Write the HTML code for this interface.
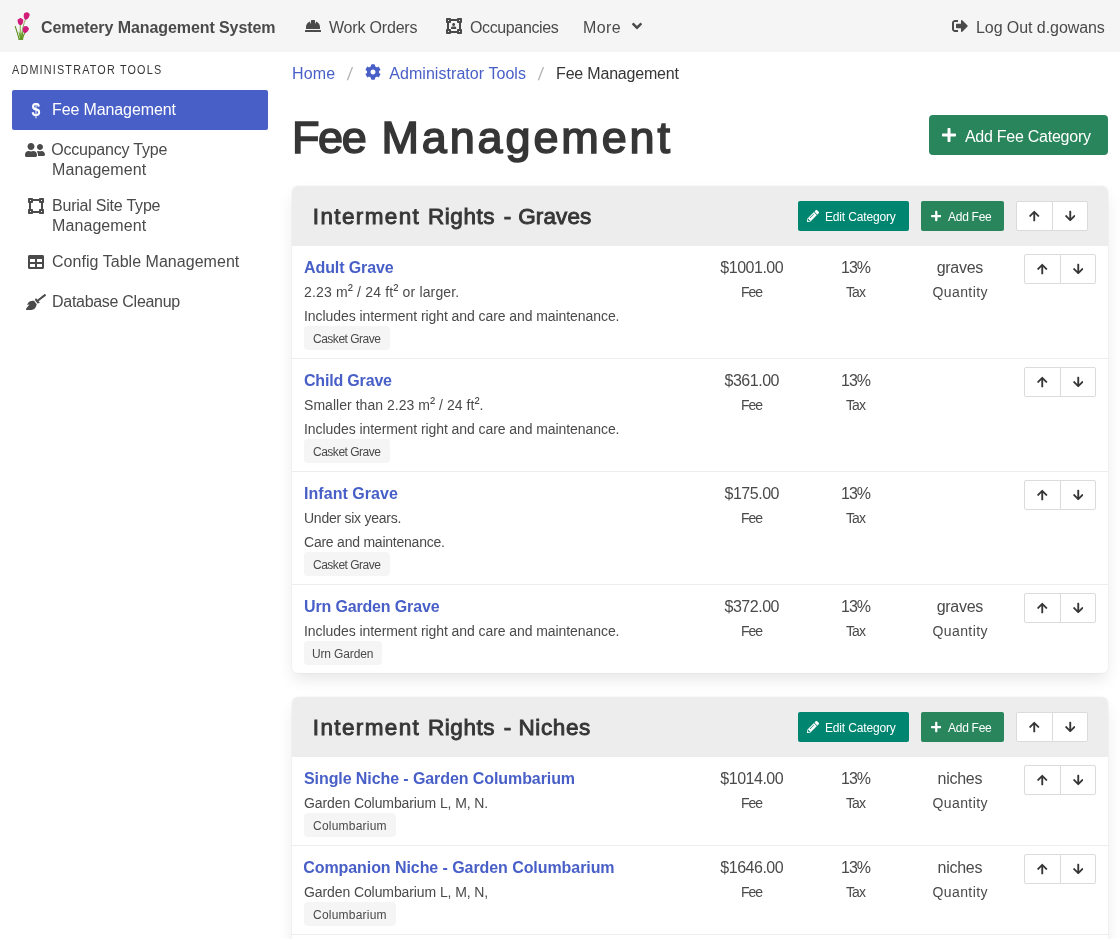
<!DOCTYPE html>
<html lang="en">
<head>
<meta charset="utf-8">
<title>Fee Management: Cemetery Management System</title>
<style>
*{box-sizing:border-box;margin:0;padding:0}
html,body{width:1120px;height:939px;overflow:hidden;background:#fff}
body{will-change:transform;font-family:"Liberation Sans",sans-serif;font-size:16px;line-height:1.5;color:#4a4a4a;position:relative}
a{color:#485fc7;text-decoration:none}
svg{display:block;fill:currentColor}
.ic{display:inline-flex;align-items:center;justify-content:center;width:24px;height:24px;flex:none}
/* navbar */
.navbar{position:absolute;left:0;top:0;width:1120px;height:52px;background:#f5f5f5;color:#4a4a4a}
.navbar .it{position:absolute;top:0;height:52px;display:flex;align-items:center;white-space:nowrap;color:#4a4a4a}
.brand b{font-weight:700;margin-left:8px}
.logo{flex:none}
.chev{margin-left:11px}
/* side menu */
.menu{position:absolute;left:12px;top:52px;width:256px}
.menu-label{position:absolute;left:0;top:8px;font-size:12px;text-transform:uppercase;color:#363636;line-height:18px;white-space:nowrap}
.menu a{position:absolute;left:0;width:256px;display:flex;align-items:flex-start;padding:8px 12px;line-height:20px;color:#4a4a4a;border-radius:2px}
.menu a .ic{margin-right:4px}
.menu a.is-active{background:#485fc7;color:#fff}
.dol{font-weight:700;font-size:19px;line-height:24px;transform:scaleX(.84);position:relative;top:0px}
/* main */
.crumb{position:absolute;left:292px;top:61px;height:24px;display:flex;align-items:center;white-space:nowrap}
.crumb .sep{color:#b5b5b5;width:6px;text-align:center;margin:0 12px;position:relative;top:1px;font-size:18px;line-height:24px;display:inline-block;transform:skewX(-6deg)}
.crumb .cur{color:#363636}
.crumb .cog{margin-right:8px;position:relative;top:-1px}
h1{position:absolute;left:292px;top:104px;font-size:45px;font-weight:400;-webkit-text-stroke:1.6px #363636;line-height:66px;color:#363636;white-space:nowrap}
.btn{display:inline-flex;align-items:center;justify-content:center;border:1px solid transparent;border-radius:4px;color:#fff;white-space:nowrap}
.btn.big{position:absolute;left:929px;top:115px;width:179px;height:40px;background:#29855b;justify-content:flex-start;padding-left:8px}
.btn.big .ic{margin-right:4px;position:relative;left:-1px}
.btn.sm{position:absolute;top:15px;height:30px;font-size:12px;border-radius:2px;justify-content:flex-start;padding-left:5px}
.btn.sm .ic{width:18px;height:18px;margin-right:3px}
.btn.teal{background:#008571}
.btn.green{background:#29855b}
.arrows{position:absolute;display:flex;width:72px;height:30px}
.arrows span{display:flex;align-items:center;justify-content:center;width:36px;height:30px;background:#fff;border:1px solid #dbdbdb;color:#363636}
.arrows span:first-child{border-radius:2px 0 0 2px;width:37px;margin-right:-1px}
.arrows span:last-child{border-radius:0 2px 2px 0}
.panel{position:absolute;left:292px;width:816px;border-radius:6px;box-shadow:0 8px 16px -2px rgba(10,10,10,.1),0 0 0 1px rgba(10,10,10,.02);background:#fff}
.ph{position:relative;height:60px;background:#ededed;border-radius:6px 6px 0 0;color:#363636}
.ph h2{position:absolute;left:20px;top:15px;font-size:22.5px;font-weight:400;-webkit-text-stroke:.9px #363636;line-height:30px;white-space:nowrap}
.row{position:relative;border-bottom:1px solid #ededed;color:#4a4a4a}
.row:last-child{border-bottom:0}
.row .l{padding:8px 12px;width:408px;white-space:nowrap}
.row .l p{height:24px;line-height:24px;font-size:14px}
.row .l p.t{font-size:16px;font-weight:700}
.row .l p.t a{color:#485fc7}
.sq{font-size:1.1em;line-height:0;position:relative;top:-2px}
.tag{display:inline-block;height:24px;line-height:24px;padding:0 0 0 9px;white-space:nowrap;overflow:hidden;border-radius:4px;background:#f5f5f5;font-size:12px;color:#4a4a4a;vertical-align:top}
.c{position:absolute;top:8px;width:104px;text-align:center;white-space:nowrap}
.c p{height:24px;line-height:24px}
.c p.s{font-size:14px}
.c1{left:408px}.c2{left:512px}.c3{left:616px}
.row .arrows{left:732px;top:8px}
/* vertical nudges to match Segoe metrics */
.navbar .it b,.navbar .nt{position:relative;top:2px}
.menu-label span{position:relative;top:1px;display:inline-block;transform:scaleX(.9);transform-origin:0 50%}
.mt{position:relative;top:2px}
.crumb [class^=k-]{position:relative;top:1px}
h1 span{position:relative;top:1px}
.btn.big [class^=k-]{position:relative;top:2px}
.btn.sm [class^=k-]{position:relative;top:1px}
.ph h2 span{position:relative;top:1px}
.row .l p>a,.row .l p>[class^=k-]{position:relative;top:2px}
.tag [class^=k-]{position:relative;top:1px}
.c p span{position:relative;top:2px}
.k-brand{letter-spacing:-0.080px;margin-left:-1.00px}.k-n-wo{letter-spacing:-0.190px}.k-n-occ{letter-spacing:-0.375px}.k-n-more{letter-spacing:0.417px}.k-n-out{letter-spacing:-0.067px}.k-label{letter-spacing:1.327px}.k-m-fee{letter-spacing:-0.115px}.k-m-occ{letter-spacing:-0.215px;margin-left:-0.80px}.k-m-mgmt{letter-spacing:0.089px}.k-m-bur{letter-spacing:-0.220px}.k-m-cfg{letter-spacing:0.036px}.k-m-db{letter-spacing:-0.287px}.k-b-home{letter-spacing:0.133px}.k-b-admin{letter-spacing:0.056px}.k-b-cur{letter-spacing:-0.192px}.k-title1{letter-spacing:-1.400px}.k-title2{letter-spacing:2.878px;margin-left:3.55px}.k-bigbtn{letter-spacing:-0.253px;margin-left:-1.10px}.k-t-adult{letter-spacing:-0.100px}.k-d-223{letter-spacing:0.158px}.k-d-inc{letter-spacing:-0.073px}.k-g-casket{letter-spacing:-0.491px}.k-f-1001{letter-spacing:-0.486px;margin-right:0.486px}.k-l-fee{letter-spacing:-1.000px;margin-right:1.000px}.k-p-13{letter-spacing:-1.000px;margin-right:1.000px}.k-l-tax{letter-spacing:-1.000px;margin-right:1.000px}.k-q-graves{letter-spacing:-0.260px;margin-right:0.260px}.k-l-qty{letter-spacing:0.386px;margin-right:-0.386px}.k-t-child{letter-spacing:-0.180px}.k-d-smaller{letter-spacing:0.038px}.k-t-infant{letter-spacing:0.045px}.k-d-under{letter-spacing:-0.253px}.k-d-care{letter-spacing:-0.232px}.k-t-urn{letter-spacing:-0.153px}.k-g-urn{letter-spacing:-0.133px;margin-left:-1.10px}.k-hw-int{letter-spacing:1.375px;margin-left:0.80px}.k-hw-rights{letter-spacing:0.540px;margin-left:1.55px}.k-hw-dash{letter-spacing:0.000px;margin-left:2.50px}.k-hw-graves{letter-spacing:0.100px;margin-left:0.65px}.k-editcat{letter-spacing:-0.158px}.k-addfee{letter-spacing:-0.267px}.k-t-single{letter-spacing:-0.086px}.k-d-gc1{letter-spacing:-0.096px}.k-g-col{letter-spacing:0.225px}.k-t-comp{letter-spacing:-0.069px;margin-left:-0.80px}.k-d-gc2{letter-spacing:-0.096px}.k-hw-niches{letter-spacing:0.600px;margin-left:0.90px}
</style>
</head>
<body>
<nav class="navbar">
<a class="it brand" style="left:12px"><svg class="logo" width="22" height="28" viewBox="0 0 22 28"><g fill="none" stroke-linecap="round"><path d="M3.200 14.400C4.600 18.500 5.800 22.500 7.200 27.200" stroke="#5b8c1c" stroke-width="1.100"/><path d="M8.300 12.500C8.100 17.500 8.200 22 8.500 27.300" stroke="#86b045" stroke-width="1.100"/><path d="M13.500 7.200C11.600 12 10.400 17 9.600 22" stroke="#6a9a2a" stroke-width=".8"/><path d="M12.800 20.800C11.600 23 10.800 25 10.400 27.300" stroke="#5b8c1c" stroke-width="1.100"/></g><path d="M6.300 19.500C7.200 22 7.700 24.500 7.900 27.800L10.800 27.800C10.700 24.500 11 21 11.800 17.500C10.300 19.500 9.500 21.500 9.100 23.500C8.400 21.800 7.400 20.500 6.300 19.500Z" fill="#669a22"/><path d="M6.400 27.800L11.200 27.800L11 26.600L6.200 26.400Z" fill="#5f9220"/><g fill="#d41c7b"><path transform="rotate(14 14.500 3.800)" d="M11.700 1.600C12.400 1.200 13 1 13.500 .4C14 .1 14.600 0 15 .3C15.800 .8 16.600 1 17.300 1.500C17.600 3.500 17.200 5.800 15.600 7.300C14.900 7.600 14 7.600 13.300 7.300C11.800 5.900 11.400 3.600 11.700 1.600Z"/><path d="M5.700 7.400C6.400 6.900 7.100 6.800 7.700 6.200C8.200 6 8.700 6 9.100 6.200C9.800 6.700 10.500 6.900 11.200 7.400C11.500 9.300 11.100 11.400 9.600 12.800C8.900 13.100 8 13.100 7.300 12.800C5.800 11.400 5.400 9.300 5.700 7.400Z"/><path transform="rotate(22 13.600 17.400)" d="M10.800 15.200C11.500 14.800 12.200 14.600 12.800 14C13.300 13.800 13.800 13.800 14.200 14C14.900 14.500 15.700 14.700 16.400 15.200C16.700 17.100 16.300 19.300 14.700 20.800C14 21.100 13.100 21.100 12.400 20.800C10.900 19.400 10.500 17.100 10.800 15.200Z"/></g><g fill="#9c0f55" opacity=".5"><path transform="rotate(14 14.500 3.800)" d="M14.300 2.500C14.800 4 14.800 5.500 14.400 7.300L15.300 7.200C15.400 5.500 15.200 3.800 14.300 2.500Z"/><path d="M8.200 8C8.700 9.500 8.700 11 8.300 12.800L9.200 12.700C9.300 11 9.100 9.300 8.200 8Z"/><path transform="rotate(22 13.600 17.400)" d="M13.400 16C13.900 17.500 13.900 19 13.500 20.800L14.400 20.700C14.500 19 14.300 17.300 13.400 16Z"/></g></svg>
<b><span class="k-brand">Cemetery Management System</span></b></a>
<a class="it" style="left:301px"><span class="ic"><svg width="16" height="16" viewBox="0 0 512 512"><path d="M480 288c0-80.250-49.280-148.920-119.190-177.620L320 192V80a16 16 0 0 0-16-16h-96a16 16 0 0 0-16 16v112l-40.810-81.620C81.280 139.080 32 207.750 32 288v64h448zm16 96H16a16 16 0 0 0-16 16v32a16 16 0 0 0 16 16h480a16 16 0 0 0 16-16v-32a16 16 0 0 0-16-16z"/></svg></span><span class="nt" style="margin-left:4px"><span class="k-n-wo">Work Orders</span></span></a>
<a class="it" style="left:442px"><span class="ic" style="position:relative"><svg width="16" height="16" viewBox="0 0 512 512"><path d="M512 128V32c0-17.670-14.330-32-32-32h-96c-17.670 0-32 14.330-32 32H160c0-17.670-14.330-32-32-32H32C14.330 0 0 14.330 0 32v96c0 17.670 14.330 32 32 32v192c-17.670 0-32 14.330-32 32v96c0 17.670 14.330 32 32 32h96c17.670 0 32-14.330 32-32h192c0 17.670 14.330 32 32 32h96c17.670 0 32-14.330 32-32v-96c0-17.670-14.330-32-32-32V160c17.670 0 32-14.330 32-32zm-96-64h32v32h-32V64zM64 64h32v32H64V64zm32 384H64v-32h32v32zm352 0h-32v-32h32v32zm-32-96h-32c-17.670 0-32 14.330-32 32v32H160v-32c0-17.670-14.330-32-32-32H96V160h32c17.670 0 32-14.330 32-32V96h192v32c0 17.670 14.330 32 32 32h32v192z"/></svg><svg width="5.25" height="6" viewBox="0 0 448 512" style="position:absolute;left:9.350px;top:8.900px"><path d="M224 256c70.700 0 128-57.300 128-128S294.700 0 224 0 96 57.300 96 128s57.300 128 128 128zm89.600 32h-16.700c-22.200 10.200-46.900 16-72.900 16s-50.600-5.800-72.900-16h-16.700C60.200 288 0 348.200 0 422.400V464c0 26.500 21.500 48 48 48h352c26.500 0 48-21.500 48-48v-41.600c0-74.200-60.200-134.400-134.400-134.400z"/></svg></span><span class="nt" style="margin-left:4px"><span class="k-n-occ">Occupancies</span></span></a>
<a class="it" style="left:583px"><span class="nt"><span class="k-n-more">More</span></span><span class="chev"><svg width="10" height="16" viewBox="0 0 320 512"><path d="M143 352.300L7 216.300c-9.400-9.400-9.400-24.600 0-33.900l22.600-22.600c9.400-9.400 24.600-9.400 33.900 0l96.400 96.400 96.400-96.400c9.400-9.400 24.600-9.400 33.900 0l22.600 22.600c9.400 9.400 9.400 24.600 0 33.900l-136 136c-9.200 9.400-24.400 9.400-33.800 0z"/></svg></span></a>
<a class="it" style="left:948px"><span class="ic"><svg width="16" height="16" viewBox="0 0 512 512"><path d="M497 273L329 441c-15 15-41 4.500-41-17v-96H152c-13.300 0-24-10.700-24-24v-96c0-13.300 10.700-24 24-24h136V88c0-21.400 25.900-32 41-17l168 168c9.300 9.400 9.300 24.600 0 34zM192 436v-40c0-6.600-5.400-12-12-12H96c-17.700 0-32-14.300-32-32V160c0-17.700 14.300-32 32-32h84c6.600 0 12-5.400 12-12V76c0-6.600-5.400-12-12-12H96c-53 0-96 43-96 96v192c0 53 43 96 96 96h84c6.600 0 12-5.400 12-12z"/></svg></span><span class="nt" style="margin-left:4px"><span class="k-n-out">Log Out d.gowans</span></span></a>
</nav>
<aside class="menu">
<p class="menu-label"><span class="k-label">Administrator Tools</span></p>
<a class="is-active" style="top:38px"><span class="ic dol">$</span><span class="mt"><span class="k-m-fee">Fee Management</span></span></a>
<a style="top:78px"><span class="ic" style="position:relative;left:-1px"><svg width="20" height="16" viewBox="0 0 640 512"><path d="M192 256c61.900 0 112-50.100 112-112S253.900 32 192 32 80 82.100 80 144s50.100 112 112 112zm76.800 32h-8.300c-20.800 10-43.900 16-68.500 16s-47.600-6-68.500-16h-8.300C51.600 288 0 339.600 0 403.200V432c0 26.500 21.500 48 48 48h288c26.500 0 48-21.500 48-48v-28.800c0-63.600-51.600-115.200-115.200-115.200zM480 256c53 0 96-43 96-96s-43-96-96-96-96 43-96 96 43 96 96 96zm48 32h-3.800c-13.900 4.800-28.600 8-44.200 8s-30.300-3.200-44.200-8H432c-20.400 0-39.200 5.900-55.700 15.400 24.400 26.300 39.700 61.200 39.700 99.800v38.400c0 2.200-.5 4.300-.6 6.400H592c26.500 0 48-21.500 48-48 0-61.900-50.100-112-112-112z"/></svg></span><span class="mt"><span class="k-m-occ">Occupancy Type</span><br><span class="k-m-mgmt">Management</span></span></a>
<a style="top:134px"><span class="ic"><svg width="16" height="16" viewBox="0 0 512 512"><path d="M512 128V32c0-17.670-14.330-32-32-32h-96c-17.670 0-32 14.330-32 32H160c0-17.670-14.330-32-32-32H32C14.330 0 0 14.330 0 32v96c0 17.670 14.330 32 32 32v192c-17.670 0-32 14.330-32 32v96c0 17.670 14.330 32 32 32h96c17.670 0 32-14.330 32-32h192c0 17.670 14.330 32 32 32h96c17.670 0 32-14.330 32-32v-96c0-17.670-14.330-32-32-32V160c17.670 0 32-14.330 32-32zm-96-64h32v32h-32V64zM64 64h32v32H64V64zm32 384H64v-32h32v32zm352 0h-32v-32h32v32zm-32-96h-32c-17.670 0-32 14.330-32 32v32H160v-32c0-17.670-14.330-32-32-32H96V160h32c17.670 0 32-14.330 32-32V96h192v32c0 17.670 14.330 32 32 32h32v192z"/></svg></span><span class="mt"><span class="k-m-bur">Burial Site Type</span><br><span class="k-m-mgmt">Management</span></span></a>
<a style="top:190px"><span class="ic"><svg width="16" height="16" viewBox="0 0 512 512"><path d="M464 32H48C21.490 32 0 53.490 0 80v352c0 26.510 21.490 48 48 48h416c26.510 0 48-21.490 48-48V80c0-26.510-21.490-48-48-48zM224 416H64v-96h160v96zm0-160H64v-96h160v96zm224 160H288v-96h160v96zm0-160H288v-96h160v96z"/></svg></span><span class="mt"><span class="k-m-cfg">Config Table Management</span></span></a>
<a style="top:230px"><span class="ic"><svg width="20" height="16" viewBox="0 0 640 512"><path d="M256.470 216.770l86.730 109.180s-16.600 102.360-76.570 150.120C206.660 523.850 0 510.190 0 510.190s3.800-23.140 11-55.430l94.620-112.170c3.970-4.700-.870-11.620-6.650-9.500l-60.400 22.090c14.440-41.660 32.720-80.040 54.600-97.470 59.970-47.760 163.300-40.940 163.300-40.940zM636.530 31.030l-19.860-25c-5.490-6.900-15.520-8.050-22.410-2.560l-232.480 177.800-34.140-42.970c-5.090-6.410-15.140-5.210-18.590 2.210l-25.330 54.550 86.730 109.180 58.800-12.450c8-1.690 11.420-11.200 6.340-17.600l-34.090-42.920 232.480-177.800c6.890-5.480 8.040-15.530 2.550-22.440z"/></svg></span><span class="mt"><span class="k-m-db">Database Cleanup</span></span></a>
</aside>
<nav class="crumb"><a><span class="k-b-home">Home</span></a><span class="sep">/</span><a style="display:flex;align-items:center"><span class="cog"><svg width="16" height="16" viewBox="0 0 512 512"><path d="M487.400 315.700l-42.600-24.600c4.300-23.200 4.300-47 0-70.200l42.600-24.600c4.900-2.800 7.100-8.600 5.500-14-11.100-35.600-30-67.800-54.700-94.600-3.800-4.100-10-5.100-14.800-2.300L380.800 110c-17.900-15.400-38.500-27.300-60.800-35.100V25.800c0-5.600-3.900-10.500-9.400-11.700-36.700-8.200-74.300-7.800-109.200 0-5.500 1.200-9.400 6.100-9.400 11.700V75c-22.200 7.900-42.800 19.800-60.800 35.100L88.700 85.500c-4.900-2.800-11-1.900-14.800 2.300-24.700 26.700-43.600 58.900-54.700 94.600-1.700 5.400.6 11.200 5.500 14L67.300 221c-4.300 23.200-4.300 47 0 70.200l-42.600 24.600c-4.900 2.800-7.100 8.600-5.500 14 11.100 35.600 30 67.800 54.700 94.600 3.800 4.100 10 5.100 14.800 2.300l42.600-24.600c17.900 15.400 38.500 27.300 60.800 35.100v49.200c0 5.600 3.900 10.500 9.400 11.700 36.700 8.200 74.300 7.800 109.200 0 5.500-1.200 9.400-6.100 9.400-11.700v-49.200c22.200-7.900 42.800-19.800 60.800-35.100l42.600 24.600c4.900 2.800 11 1.900 14.800-2.300 24.700-26.700 43.600-58.900 54.700-94.600 1.500-5.500-.7-11.300-5.600-14.100zM256 336c-44.100 0-80-35.900-80-80s35.900-80 80-80 80 35.900 80 80-35.900 80-80 80z"/></svg></span><span class="k-b-admin">Administrator Tools</span></a><span class="sep">/</span><span class="cur"><span class="k-b-cur">Fee Management</span></span></nav>
<h1><span class="k-title1">Fee</span> <span class="k-title2">Management</span></h1>
<a class="btn big"><span class="ic"><svg width="14" height="16" viewBox="0 0 448 512"><path d="M416 208H272V64c0-17.670-14.330-32-32-32h-32c-17.670 0-32 14.330-32 32v144H32c-17.670 0-32 14.330-32 32v32c0 17.670 14.330 32 32 32h144v144c0 17.670 14.330 32 32 32h32c17.670 0 32-14.330 32-32V304h144c17.670 0 32-14.330 32-32v-32c0-17.670-14.330-32-32-32z"/></svg></span><span class="k-bigbtn">Add Fee Category</span></a>
<section class="panel" style="top:186px"><div class="ph"><h2><span class="k-hw-int">Interment</span> <span class="k-hw-rights">Rights</span> <span class="k-hw-dash">-</span> <span class="k-hw-graves">Graves</span></h2><a class="btn sm teal" style="left:506px;width:111px"><span class="ic"><svg width="12" height="12" viewBox="0 0 512 512"><path d="M497.900 142.100l-46.100 46.100c-4.700 4.700-12.300 4.700-17 0l-111-111c-4.700-4.700-4.700-12.300 0-17l46.100-46.100c18.700-18.700 49.100-18.700 67.900 0l60.100 60.100c18.800 18.700 18.800 49.100 0 67.900zM284.200 99.800L21.600 362.400.4 483.900c-2.900 16.400 11.400 30.600 27.800 27.800l121.500-21.300 262.600-262.600c4.700-4.700 4.700-12.300 0-17l-111-111c-4.800-4.700-12.400-4.700-17.100 0zM124.100 339.900c-5.500-5.500-5.500-14.300 0-19.800l154-154c5.500-5.500 14.300-5.500 19.800 0s5.500 14.300 0 19.800l-154 154c-5.500 5.500-14.300 5.500-19.800 0zM88 424h48v36.300l-64.500 11.300-31.100-31.100L51.700 376H88v48z"/></svg></span><span class="k-editcat">Edit Category</span></a><a class="btn sm green" style="left:629px;width:83px"><span class="ic"><svg width="10.5" height="12" viewBox="0 0 448 512"><path d="M416 208H272V64c0-17.670-14.330-32-32-32h-32c-17.670 0-32 14.330-32 32v144H32c-17.670 0-32 14.330-32 32v32c0 17.670 14.330 32 32 32h144v144c0 17.670 14.330 32 32 32h32c17.670 0 32-14.330 32-32V304h144c17.670 0 32-14.330 32-32v-32c0-17.670-14.330-32-32-32z"/></svg></span><span class="k-addfee">Add Fee</span></a><div class="arrows" style="left:724px;top:15px"><span><svg width="10.5" height="12" viewBox="0 0 448 512"><path d="M34.900 289.500l-22.200-22.200c-9.400-9.400-9.400-24.600 0-33.900L207 39c9.400-9.400 24.600-9.400 33.900 0l194.300 194.300c9.400 9.400 9.400 24.600 0 33.900L413 289.400c-9.500 9.500-25 9.300-34.300-.4L264 168.600V456c0 13.300-10.700 24-24 24h-32c-13.300 0-24-10.700-24-24V168.600L69.200 289.100c-9.300 9.800-24.800 10-34.300.4z"/></svg></span><span><svg width="10.5" height="12" viewBox="0 0 448 512"><path d="M413.100 222.500l22.200 22.200c9.400 9.400 9.400 24.600 0 33.900L241 473c-9.400 9.400-24.600 9.400-33.900 0L12.700 278.600c-9.400-9.400-9.400-24.600 0-33.900l22.200-22.200c9.500-9.500 25-9.300 34.300.4L184 343.400V56c0-13.300 10.700-24 24-24h32c13.300 0 24 10.700 24 24v287.400l114.800-120.500c9.300-9.800 24.800-10 34.300-.4z"/></svg></span></div></div>
<div class="row"><div class="l"><p class="t"><a><span class="k-t-adult">Adult Grave</span></a></p><p><span class="k-d-223">2.23 m<span class="sq">²</span> / 24 ft<span class="sq">²</span> or larger.</span></p><p><span class="k-d-inc">Includes interment right and care and maintenance.</span></p><p><span class="tag" style="width:86px"><span class="k-g-casket">Casket Grave</span></span></p></div><div class="c c1"><p><span class="k-f-1001">$1001.00</span></p><p class="s"><span class="k-l-fee">Fee</span></p></div><div class="c c2"><p><span class="k-p-13">13%</span></p><p class="s"><span class="k-l-tax">Tax</span></p></div><div class="c c3"><p><span class="k-q-graves">graves</span></p><p class="s"><span class="k-l-qty">Quantity</span></p></div><div class="arrows"><span><svg width="10.5" height="12" viewBox="0 0 448 512"><path d="M34.900 289.500l-22.200-22.200c-9.400-9.400-9.400-24.600 0-33.900L207 39c9.400-9.400 24.600-9.400 33.900 0l194.300 194.300c9.400 9.400 9.400 24.600 0 33.900L413 289.400c-9.500 9.500-25 9.300-34.300-.4L264 168.600V456c0 13.300-10.700 24-24 24h-32c-13.300 0-24-10.700-24-24V168.600L69.200 289.100c-9.300 9.800-24.800 10-34.300.4z"/></svg></span><span><svg width="10.5" height="12" viewBox="0 0 448 512"><path d="M413.100 222.500l22.200 22.200c9.400 9.400 9.400 24.600 0 33.900L241 473c-9.400 9.400-24.600 9.400-33.900 0L12.700 278.600c-9.400-9.400-9.400-24.600 0-33.900l22.200-22.200c9.500-9.500 25-9.300 34.300.4L184 343.400V56c0-13.300 10.700-24 24-24h32c13.300 0 24 10.700 24 24v287.400l114.800-120.500c9.300-9.800 24.800-10 34.300-.4z"/></svg></span></div></div>
<div class="row"><div class="l"><p class="t"><a><span class="k-t-child">Child Grave</span></a></p><p><span class="k-d-smaller">Smaller than 2.23 m<span class="sq">²</span> / 24 ft<span class="sq">²</span>.</span></p><p><span class="k-d-inc">Includes interment right and care and maintenance.</span></p><p><span class="tag" style="width:86px"><span class="k-g-casket">Casket Grave</span></span></p></div><div class="c c1"><p><span class="k-f-1001">$361.00</span></p><p class="s"><span class="k-l-fee">Fee</span></p></div><div class="c c2"><p><span class="k-p-13">13%</span></p><p class="s"><span class="k-l-tax">Tax</span></p></div><div class="arrows"><span><svg width="10.5" height="12" viewBox="0 0 448 512"><path d="M34.900 289.500l-22.200-22.200c-9.400-9.400-9.400-24.600 0-33.900L207 39c9.400-9.400 24.600-9.400 33.900 0l194.300 194.300c9.400 9.400 9.400 24.600 0 33.900L413 289.400c-9.500 9.500-25 9.300-34.300-.4L264 168.600V456c0 13.300-10.700 24-24 24h-32c-13.300 0-24-10.700-24-24V168.600L69.200 289.100c-9.300 9.800-24.800 10-34.300.4z"/></svg></span><span><svg width="10.5" height="12" viewBox="0 0 448 512"><path d="M413.100 222.500l22.200 22.200c9.400 9.400 9.400 24.600 0 33.900L241 473c-9.400 9.400-24.600 9.400-33.900 0L12.700 278.600c-9.400-9.400-9.400-24.600 0-33.900l22.200-22.200c9.500-9.500 25-9.300 34.300.4L184 343.400V56c0-13.300 10.700-24 24-24h32c13.300 0 24 10.700 24 24v287.400l114.800-120.500c9.300-9.800 24.800-10 34.300-.4z"/></svg></span></div></div>
<div class="row"><div class="l"><p class="t"><a><span class="k-t-infant">Infant Grave</span></a></p><p><span class="k-d-under">Under six years.</span></p><p><span class="k-d-care">Care and maintenance.</span></p><p><span class="tag" style="width:86px"><span class="k-g-casket">Casket Grave</span></span></p></div><div class="c c1"><p><span class="k-f-1001">$175.00</span></p><p class="s"><span class="k-l-fee">Fee</span></p></div><div class="c c2"><p><span class="k-p-13">13%</span></p><p class="s"><span class="k-l-tax">Tax</span></p></div><div class="arrows"><span><svg width="10.5" height="12" viewBox="0 0 448 512"><path d="M34.900 289.500l-22.200-22.200c-9.400-9.400-9.400-24.600 0-33.900L207 39c9.400-9.400 24.600-9.400 33.900 0l194.300 194.300c9.400 9.400 9.400 24.600 0 33.900L413 289.400c-9.500 9.500-25 9.300-34.300-.4L264 168.600V456c0 13.300-10.700 24-24 24h-32c-13.300 0-24-10.700-24-24V168.600L69.200 289.100c-9.300 9.800-24.800 10-34.300.4z"/></svg></span><span><svg width="10.5" height="12" viewBox="0 0 448 512"><path d="M413.100 222.500l22.200 22.200c9.400 9.400 9.400 24.600 0 33.900L241 473c-9.400 9.400-24.600 9.400-33.900 0L12.700 278.600c-9.400-9.400-9.400-24.600 0-33.900l22.200-22.200c9.500-9.500 25-9.300 34.300.4L184 343.400V56c0-13.300 10.700-24 24-24h32c13.300 0 24 10.700 24 24v287.400l114.800-120.500c9.300-9.800 24.800-10 34.300-.4z"/></svg></span></div></div>
<div class="row"><div class="l"><p class="t"><a><span class="k-t-urn">Urn Garden Grave</span></a></p><p><span class="k-d-inc">Includes interment right and care and maintenance.</span></p><p><span class="tag" style="width:78px"><span class="k-g-urn">Urn Garden</span></span></p></div><div class="c c1"><p><span class="k-f-1001">$372.00</span></p><p class="s"><span class="k-l-fee">Fee</span></p></div><div class="c c2"><p><span class="k-p-13">13%</span></p><p class="s"><span class="k-l-tax">Tax</span></p></div><div class="c c3"><p><span class="k-q-graves">graves</span></p><p class="s"><span class="k-l-qty">Quantity</span></p></div><div class="arrows"><span><svg width="10.5" height="12" viewBox="0 0 448 512"><path d="M34.900 289.500l-22.200-22.200c-9.400-9.400-9.400-24.600 0-33.900L207 39c9.400-9.400 24.600-9.400 33.900 0l194.300 194.300c9.400 9.400 9.400 24.600 0 33.900L413 289.400c-9.500 9.500-25 9.300-34.300-.4L264 168.600V456c0 13.300-10.700 24-24 24h-32c-13.300 0-24-10.700-24-24V168.600L69.200 289.100c-9.300 9.800-24.800 10-34.300.4z"/></svg></span><span><svg width="10.5" height="12" viewBox="0 0 448 512"><path d="M413.100 222.500l22.200 22.200c9.400 9.400 9.400 24.600 0 33.900L241 473c-9.400 9.400-24.600 9.400-33.900 0L12.700 278.600c-9.400-9.400-9.400-24.600 0-33.900l22.200-22.200c9.500-9.500 25-9.300 34.300.4L184 343.400V56c0-13.300 10.700-24 24-24h32c13.300 0 24 10.700 24 24v287.400l114.800-120.500c9.300-9.800 24.800-10 34.300-.4z"/></svg></span></div></div>
</section>
<section class="panel" style="top:697px"><div class="ph"><h2><span class="k-hw-int">Interment</span> <span class="k-hw-rights">Rights</span> <span class="k-hw-dash">-</span> <span class="k-hw-niches">Niches</span></h2><a class="btn sm teal" style="left:506px;width:111px"><span class="ic"><svg width="12" height="12" viewBox="0 0 512 512"><path d="M497.900 142.100l-46.100 46.100c-4.700 4.700-12.300 4.700-17 0l-111-111c-4.700-4.700-4.700-12.300 0-17l46.100-46.100c18.700-18.700 49.100-18.700 67.900 0l60.100 60.100c18.800 18.700 18.800 49.100 0 67.900zM284.200 99.800L21.600 362.400.4 483.900c-2.900 16.400 11.400 30.600 27.800 27.800l121.500-21.300 262.600-262.600c4.700-4.700 4.700-12.300 0-17l-111-111c-4.800-4.700-12.400-4.700-17.100 0zM124.100 339.900c-5.500-5.500-5.500-14.300 0-19.800l154-154c5.500-5.500 14.300-5.500 19.800 0s5.500 14.300 0 19.800l-154 154c-5.500 5.500-14.300 5.500-19.800 0zM88 424h48v36.300l-64.500 11.300-31.100-31.100L51.700 376H88v48z"/></svg></span><span class="k-editcat">Edit Category</span></a><a class="btn sm green" style="left:629px;width:83px"><span class="ic"><svg width="10.5" height="12" viewBox="0 0 448 512"><path d="M416 208H272V64c0-17.670-14.330-32-32-32h-32c-17.670 0-32 14.330-32 32v144H32c-17.670 0-32 14.330-32 32v32c0 17.670 14.330 32 32 32h144v144c0 17.670 14.330 32 32 32h32c17.670 0 32-14.330 32-32V304h144c17.670 0 32-14.330 32-32v-32c0-17.670-14.330-32-32-32z"/></svg></span><span class="k-addfee">Add Fee</span></a><div class="arrows" style="left:724px;top:15px"><span><svg width="10.5" height="12" viewBox="0 0 448 512"><path d="M34.900 289.500l-22.200-22.200c-9.400-9.400-9.400-24.600 0-33.900L207 39c9.400-9.400 24.600-9.400 33.900 0l194.300 194.300c9.400 9.400 9.400 24.600 0 33.900L413 289.400c-9.500 9.500-25 9.300-34.300-.4L264 168.600V456c0 13.300-10.700 24-24 24h-32c-13.300 0-24-10.700-24-24V168.600L69.200 289.100c-9.300 9.800-24.800 10-34.300.4z"/></svg></span><span><svg width="10.5" height="12" viewBox="0 0 448 512"><path d="M413.100 222.500l22.200 22.200c9.400 9.400 9.400 24.600 0 33.900L241 473c-9.400 9.400-24.600 9.400-33.900 0L12.700 278.600c-9.400-9.400-9.400-24.600 0-33.900l22.200-22.200c9.500-9.500 25-9.300 34.300.4L184 343.400V56c0-13.300 10.700-24 24-24h32c13.300 0 24 10.700 24 24v287.400l114.800-120.500c9.300-9.800 24.800-10 34.300-.4z"/></svg></span></div></div>
<div class="row"><div class="l"><p class="t"><a><span class="k-t-single">Single Niche - Garden Columbarium</span></a></p><p><span class="k-d-gc1">Garden Columbarium L, M, N.</span></p><p><span class="tag" style="width:92px"><span class="k-g-col">Columbarium</span></span></p></div><div class="c c1"><p><span class="k-f-1001">$1014.00</span></p><p class="s"><span class="k-l-fee">Fee</span></p></div><div class="c c2"><p><span class="k-p-13">13%</span></p><p class="s"><span class="k-l-tax">Tax</span></p></div><div class="c c3"><p><span class="k-q-graves">niches</span></p><p class="s"><span class="k-l-qty">Quantity</span></p></div><div class="arrows"><span><svg width="10.5" height="12" viewBox="0 0 448 512"><path d="M34.900 289.500l-22.200-22.200c-9.400-9.400-9.400-24.600 0-33.900L207 39c9.400-9.400 24.600-9.400 33.900 0l194.300 194.300c9.400 9.400 9.400 24.600 0 33.900L413 289.400c-9.500 9.500-25 9.300-34.300-.4L264 168.600V456c0 13.300-10.700 24-24 24h-32c-13.300 0-24-10.700-24-24V168.600L69.200 289.100c-9.300 9.800-24.800 10-34.300.4z"/></svg></span><span><svg width="10.5" height="12" viewBox="0 0 448 512"><path d="M413.100 222.500l22.200 22.200c9.400 9.400 9.400 24.600 0 33.900L241 473c-9.400 9.400-24.600 9.400-33.900 0L12.700 278.600c-9.400-9.400-9.400-24.600 0-33.900l22.200-22.200c9.500-9.500 25-9.300 34.300.4L184 343.400V56c0-13.300 10.700-24 24-24h32c13.300 0 24 10.700 24 24v287.400l114.800-120.500c9.300-9.800 24.800-10 34.300-.4z"/></svg></span></div></div>
<div class="row"><div class="l"><p class="t"><a><span class="k-t-comp">Companion Niche - Garden Columbarium</span></a></p><p><span class="k-d-gc2">Garden Columbarium L, M, N,</span></p><p><span class="tag" style="width:92px"><span class="k-g-col">Columbarium</span></span></p></div><div class="c c1"><p><span class="k-f-1001">$1646.00</span></p><p class="s"><span class="k-l-fee">Fee</span></p></div><div class="c c2"><p><span class="k-p-13">13%</span></p><p class="s"><span class="k-l-tax">Tax</span></p></div><div class="c c3"><p><span class="k-q-graves">niches</span></p><p class="s"><span class="k-l-qty">Quantity</span></p></div><div class="arrows"><span><svg width="10.5" height="12" viewBox="0 0 448 512"><path d="M34.900 289.500l-22.200-22.200c-9.400-9.400-9.400-24.600 0-33.900L207 39c9.400-9.400 24.600-9.400 33.900 0l194.300 194.300c9.400 9.400 9.400 24.600 0 33.900L413 289.400c-9.500 9.500-25 9.300-34.300-.4L264 168.600V456c0 13.300-10.700 24-24 24h-32c-13.300 0-24-10.700-24-24V168.600L69.200 289.100c-9.300 9.800-24.800 10-34.300.4z"/></svg></span><span><svg width="10.5" height="12" viewBox="0 0 448 512"><path d="M413.100 222.500l22.200 22.200c9.400 9.400 9.400 24.600 0 33.900L241 473c-9.400 9.400-24.600 9.400-33.900 0L12.700 278.600c-9.400-9.400-9.400-24.600 0-33.900l22.200-22.200c9.500-9.500 25-9.300 34.300.4L184 343.400V56c0-13.300 10.700-24 24-24h32c13.300 0 24 10.700 24 24v287.400l114.800-120.500c9.300-9.800 24.800-10 34.300-.4z"/></svg></span></div></div>
<div class="row"><div class="l"><p class="t"><a><span class="k-t-single">Single Niche - Upper Columbarium</span></a></p><p><span class="k-d-gc1">Upper Columbarium A, B, C.</span></p><p><span class="tag" style="width:92px"><span class="k-g-col">Columbarium</span></span></p></div><div class="c c1"><p><span class="k-f-1001">$1014.00</span></p><p class="s"><span class="k-l-fee">Fee</span></p></div><div class="c c2"><p><span class="k-p-13">13%</span></p><p class="s"><span class="k-l-tax">Tax</span></p></div><div class="c c3"><p><span class="k-q-graves">niches</span></p><p class="s"><span class="k-l-qty">Quantity</span></p></div><div class="arrows"><span><svg width="10.5" height="12" viewBox="0 0 448 512"><path d="M34.900 289.500l-22.200-22.200c-9.400-9.400-9.400-24.600 0-33.900L207 39c9.400-9.400 24.600-9.400 33.900 0l194.300 194.300c9.400 9.400 9.400 24.600 0 33.900L413 289.400c-9.500 9.500-25 9.300-34.300-.4L264 168.600V456c0 13.300-10.700 24-24 24h-32c-13.300 0-24-10.700-24-24V168.600L69.200 289.100c-9.300 9.800-24.800 10-34.300.4z"/></svg></span><span><svg width="10.5" height="12" viewBox="0 0 448 512"><path d="M413.100 222.500l22.200 22.200c9.400 9.400 9.400 24.600 0 33.900L241 473c-9.400 9.400-24.600 9.400-33.900 0L12.700 278.600c-9.400-9.400-9.400-24.600 0-33.900l22.200-22.200c9.500-9.500 25-9.300 34.300.4L184 343.400V56c0-13.300 10.700-24 24-24h32c13.300 0 24 10.700 24 24v287.400l114.800-120.500c9.300-9.800 24.800-10 34.300-.4z"/></svg></span></div></div>
</section>
</body>
</html>
